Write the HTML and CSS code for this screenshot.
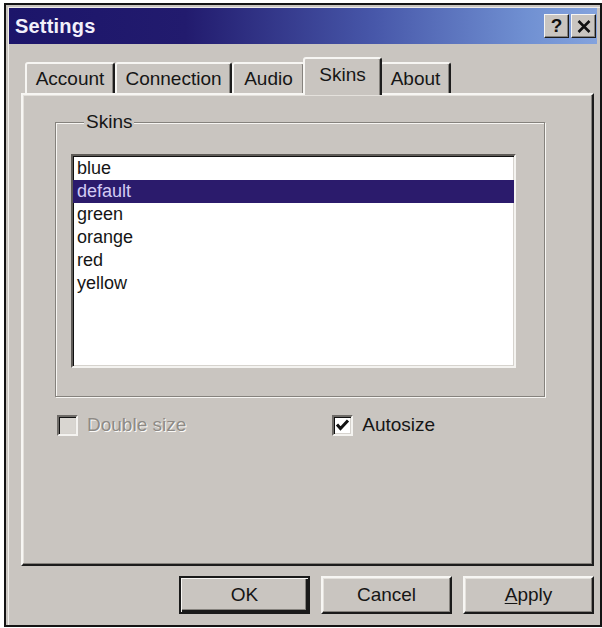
FILE: index.html
```html
<!DOCTYPE html>
<html lang="en">
<head>
<meta charset="utf-8">
<title>Settings</title>
<link rel="stylesheet" href="styles.css">
</head>
<body>
<div class="window">
  <div class="titlebar">
    <span class="title">Settings</span>
    <div class="caption-buttons">
      <span class="caption-btn">?</span>
      <span class="caption-btn">
        <svg width="14" height="13" viewBox="0 0 14 13"><path d="M1.5 1 L12.5 12 M12.5 1 L1.5 12" stroke="#111" stroke-width="2.6" fill="none"/></svg>
      </span>
    </div>
  </div>

  <div class="body">
    <div class="tabs">
      <div class="tab tab-account">Account</div>
      <div class="tab tab-connection">Connection</div>
      <div class="tab tab-audio">Audio</div>
      <div class="tab tab-skins selected">Skins</div>
      <div class="tab tab-about">About</div>
    </div>

    <div class="panel">
      <fieldset class="group">
        <legend>Skins</legend>
        <ul class="listbox">
          <li>blue</li>
          <li class="current">default</li>
          <li>green</li>
          <li>orange</li>
          <li>red</li>
          <li>yellow</li>
        </ul>
      </fieldset>

      <div class="options">
        <label class="check disabled"><span class="box"></span><span class="label">Double size</span></label>
        <label class="check checked"><span class="box">
          <svg width="15" height="14" viewBox="0 0 15 14"><path d="M2 6.5 L5.5 10.5 L13 2.5" stroke="#111" stroke-width="3" fill="none"/></svg>
        </span><span class="label">Autosize</span></label>
      </div>
    </div>

    <div class="actions">
      <button class="btn default">OK</button>
      <button class="btn">Cancel</button>
      <button class="btn"><u>A</u>pply</button>
    </div>
  </div>
</div>
</body>
</html>
```

FILE: styles.css
```css
html, body {
  margin: 0;
  padding: 0;
  background: #ffffff;
}

body {
  font-family: "Liberation Sans", Arial, sans-serif;
  color: #161616;
}

/* dialog frame */
.window {
  box-sizing: border-box;
  margin: 3px 0 0 4px;
  width: 598px;
  height: 624px;
  padding: 3px 3px 0 3px;
  background: #c9c5c0;
  border: 2px solid #141414;
  box-shadow: inset 2px 2px 0 #c9c5c0, inset 3px 3px 0 #efede9;
}

/* caption bar */
.titlebar {
  height: 36px;
  display: flex;
  align-items: center;
  justify-content: space-between;
  padding: 0 1px 0 6px;
  background: linear-gradient(90deg, #1c156a 0%, #221b6e 30%, #4757a9 62%, #7090d2 88%, #84a3dd 100%);
}

.title {
  color: #f2f0fb;
  font-weight: bold;
  font-size: 20px;
  letter-spacing: 0.2px;
}

.caption-buttons {
  display: flex;
  gap: 2px;
}

.caption-btn {
  box-sizing: border-box;
  width: 25px;
  height: 24px;
  display: flex;
  align-items: center;
  justify-content: center;
  background: #c9c5c0;
  border: 1px solid;
  border-color: #f6f5f2 #1a1a1a #1a1a1a #f6f5f2;
  box-shadow: inset -1px -1px 0 #85827d;
  font-weight: bold;
  font-size: 19px;
  color: #111;
}

/* dialog body */
.body {
  padding: 13px 0 0 12px;
}

.tabs {
  display: flex;
  align-items: flex-end;
  padding-left: 4px;
  height: 36px;
}

.tab {
  box-sizing: border-box;
  height: 31px;
  display: flex;
  align-items: center;
  justify-content: center;
  font-size: 19px;
  border-style: solid;
  border-width: 2px 2px 0 2px;
  border-color: #f7f6f3 #1c1c1c transparent #f7f6f3;
  border-radius: 3px 3px 0 0;
  box-shadow: inset -1px 0 0 #85827d;
  background: #c9c5c0;
}

.tab-account { width: 90px; }
.tab-connection { width: 117px; }
.tab-audio { width: 73px; }
.tab-skins { width: 79px; }
.tab-about { width: 71px; }

.tab.selected {
  position: relative;
  z-index: 1;
  height: 38px;
  margin: 0 -2px -2px -2px;
  padding-bottom: 4px;
}

.panel {
  box-sizing: border-box;
  width: 573px;
  height: 473px;
  border: 2px solid;
  border-color: #f7f6f3 #1c1c1c #1c1c1c #f7f6f3;
  box-shadow: inset -1px -1px 0 #85827d, inset 1px 1px 0 #e4e1dc;
  padding: 0 0 0 32px;
}

/* etched group box */
.group {
  box-sizing: border-box;
  width: 490px;
  height: 286px;
  margin: 16px 0 0 0;
  padding: 21px 0 0 15px;
  border: 1px solid #85827d;
  box-shadow: 1px 1px 0 #f7f6f3, inset 1px 1px 0 #f7f6f3;
}

.group legend {
  font-size: 19px;
  padding: 0 2px;
  margin-left: 13px;
  background: #c9c5c0;
  line-height: 22px;
}

.listbox {
  box-sizing: border-box;
  list-style: none;
  margin: 0;
  padding: 1px 0 0 0;
  width: 445px;
  height: 214px;
  background: #ffffff;
  border: 2px solid;
  border-color: #5e5b57 #f4f3f0 #f4f3f0 #5e5b57;
  box-shadow: inset 1px 1px 0 #111, inset -1px -1px 0 #d6d3ce;
}

.listbox li {
  height: 23px;
  line-height: 23px;
  padding-left: 4px;
  font-size: 18px;
  color: #151515;
}

.listbox li.current {
  background: #2b1b6c;
  color: #d2cbf4;
}

/* check boxes */
.options {
  display: flex;
  align-items: center;
  margin: 16px 0 0 2px;
  height: 24px;
}

.check {
  display: flex;
  align-items: center;
  font-size: 19px;
}

.check.checked {
  margin-left: 146px;
}

.check .box {
  box-sizing: border-box;
  width: 21px;
  height: 21px;
  display: flex;
  align-items: center;
  justify-content: center;
  border: 2px solid;
  border-color: #6e6b67 #f4f3f0 #f4f3f0 #6e6b67;
  box-shadow: inset 1px 1px 0 #111, inset -1px -1px 0 #d6d3ce;
  background: #ffffff;
  margin-right: 9px;
}

.check.disabled .box {
  background: #d9d6d1;
}

.check.disabled .label {
  color: #8e8a85;
  text-shadow: 1px 1px 0 #fbfaf8;
}

/* command buttons */
.actions {
  display: flex;
  justify-content: flex-end;
  gap: 11px;
  width: 573px;
  margin-top: 10px;
}

.btn {
  box-sizing: border-box;
  width: 131px;
  height: 38px;
  font-family: "Liberation Sans", Arial, sans-serif;
  font-size: 19px;
  color: #151515;
  background: #c9c5c0;
  border: 2px solid;
  border-color: #f7f6f3 #1a1a1a #1a1a1a #f7f6f3;
  box-shadow: inset -1px -1px 0 #85827d, inset 1px 1px 0 #e4e1dc;
  padding: 0;
}

.btn.default {
  border-color: #1a1a1a;
  box-shadow: inset 1px 1px 0 #f7f6f3, inset -2px -2px 0 #1a1a1a, inset -3px -3px 0 #85827d;
}

.btn u {
  text-underline-offset: 2px;
}
```
